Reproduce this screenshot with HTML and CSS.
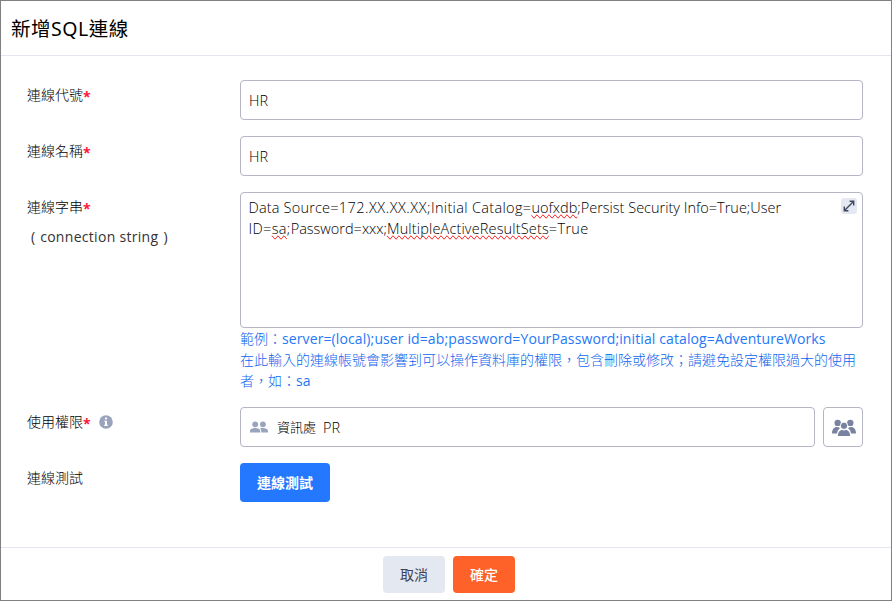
FILE: index.html
```html
<!DOCTYPE html>
<html lang="zh-Hant">
<head>
<meta charset="utf-8">
<title>新增SQL連線</title>
<link rel="stylesheet" href="styles.css">
</head>
<body>
<main class="dialog">
  <header class="dialog-header"><h1>新增SQL連線</h1></header>
  <div class="dialog-body">
    <div class="row">
      <div class="label">連線代號<b class="required">*</b></div>
      <div class="input"><span class="value">HR</span></div>
    </div>
    <div class="row">
      <div class="label">連線名稱<b class="required">*</b></div>
      <div class="input"><span class="value">HR</span></div>
    </div>
    <div class="row">
      <div class="label">連線字串<b class="required">*</b><div class="sub"><span class="paren">(</span><span class="sub-text">connection string</span><span class="paren">)</span></div></div>
      <div class="field">
        <div class="textarea">
          <div class="line"><span class="part-source">Data Source=</span><span class="part-host">172.XX.XX.XX;</span><span class="part-catalog">Initial Catalog=</span><span class="misspelt">uofxdb</span>;Persist Security Info=True;User</div>
          <div class="line"><span class="part-id">ID=<span class="misspelt">sa</span>;</span>Password=xxx;<span class="misspelt part-sets">MultipleActiveResultSets</span><span class="part-id">=True</span></div>
          <span class="expand"><svg width="16" height="16" viewBox="0 0 16 16" fill="none" stroke="#40485e" stroke-width="1.4"><path d="M3.5 12.5 12.5 3.5M8.6 3.3h4.1v4.1M3.3 8.6v4.1h4.1"/></svg></span>
        </div>
        <div class="hint">
          <div>範例：<span class="hint-latin">server=(local);user id=ab;password=YourPassword;initial catalog=AdventureWorks</span></div>
          <div>在此輸入的連線帳號會影響到可以操作資料庫的權限，包含刪除或修改；請避免設定權限過大的使用</div>
          <div>者，如：<span class="hint-latin">sa</span></div>
        </div>
      </div>
    </div>
    <div class="row">
      <div class="label">使用權限<b class="required">*</b><svg class="info" width="14" height="14" viewBox="0 0 14 14"><circle cx="7" cy="7" r="6.8" fill="#98a3bc"/><path fill="#fff" d="M6 2.6h2v2H6zM5.4 5.7H8v4h.8v1.2H5.2V9.7H6V6.900h-.6z"/></svg></div>
      <div class="members">
        <div class="input picker">
          <svg width="18" height="12" viewBox="0 0 18 12" fill="#98a3bc"><circle cx="5.2" cy="3.3" r="2.9"/><circle cx="12.9" cy="3.3" r="2.9"/><path d="M0 11.500V9.800c0-1.900 3-2.800 5.200-2.800s5 .9 5 2.800v1.700zM11.200 11.500V9.800c0-1-.5-1.800-1.300-2.400.9-.3 2-.4 3-.4 2.200 0 5.100.9 5.100 2.800v1.700z"/></svg>
          <span class="dept">資訊處</span><span class="value">PR</span>
        </div>
        <div class="group-button"><svg width="24" height="18" viewBox="0 0 24 18" fill="#7983a1"><circle cx="5.700" cy="3.900" r="3.200"/><circle cx="18.300" cy="3.900" r="3.200"/><path d="M0 14.500c0-4 1.800-6.500 5-6.500 1.300 0 2.300.4 3 1.200-1.600 1.100-2.600 2.700-3 5.300zM24 14.500c0-4-1.800-6.500-5-6.500-1.300 0-2.300.4-3 1.200 1.600 1.100 2.600 2.700 3 5.300z"/><circle cx="12" cy="6.800" r="3.700" stroke="#fff"/><path d="M5.900 17c0-3.800 2-6 4.300-6 .6.500 3 .5 3.600 0 2.300 0 4.300 2.200 4.300 6z"/></svg></div>
      </div>
    </div>
    <div class="row">
      <div class="label">連線測試</div>
      <div class="test-button">連線測試</div>
    </div>
  </div>
  <footer class="dialog-footer"><div class="button cancel">取消</div><div class="button confirm">確定</div></footer>
</main>
</body>
</html>
```
FILE: styles.css
```css
* { box-sizing: border-box; }
body {
  margin: 0;
  background: #fff;
  color: #333;
  font: 14px/21px "Noto Sans", "Noto Sans CJK TC", sans-serif;
}
.dialog {
  display: flex;
  flex-direction: column;
  height: 601px;
  border: 1px solid #808080;
}
.dialog-header {
  height: 55px;
  padding: 15px 10px 0;
  border-bottom: 1px solid #e3e6ee;
}
h1 { margin: 0; color: #000; font-size: 19.500px; line-height: 26px; font-weight: 400; letter-spacing: .5px; }
.dialog-body {
  flex: 1;
  display: flex;
  flex-direction: column;
  gap: 16px;
  padding: 24px 28px 0 26px;
}
.row { display: grid; grid-template-columns: 213px 623px; }
.label { padding-top: 4px; color: #000; font-family: "Noto Sans CJK TC", sans-serif; font-weight: 300; }
.required {
  display: inline-block;
  width: 8px;
  color: #ff1735;
  font: 700 14px/14px "Open Sans", sans-serif;
  vertical-align: -2px;
}
.sub { display: flex; gap: 5px; padding: 9px 0 0 4px; color: #333; font-family: "Open Sans", sans-serif; font-weight: 370; }
.sub-text { letter-spacing: .3px; }
.input {
  display: flex;
  align-items: center;
  height: 40px;
  padding: 0 8px;
  border: 1px solid #b5b5c3;
  border-radius: 4px;
}
.value, .line { color: #000; font-family: "Open Sans", sans-serif; font-size: 14.500px; font-weight: 300; }
.textarea {
  position: relative;
  height: 136px;
  padding: 4px 7.500px;
  border: 1px solid #b5b5c3;
  border-radius: 4px;
}
.line { white-space: nowrap; width: max-content; }
.part-source { letter-spacing: .18px; }
.part-host { letter-spacing: .53px; }
.part-catalog { letter-spacing: .33px; }
.part-id { letter-spacing: .35px; }
.part-sets { letter-spacing: .15px; }
.misspelt { text-decoration: spelling-error; }
.expand {
  position: absolute;
  top: 5px;
  right: 5px;
  width: 16px;
  height: 16px;
  border-radius: 3px;
  background: #e4e8f1;
}
.expand svg { display: block; }
.hint { height: 63px; color: #0d66ee; white-space: nowrap; font-family: "Noto Sans CJK TC", sans-serif; font-weight: 300; }
.hint-latin { color: #2378f7; font-family: "Open Sans", sans-serif; font-weight: 370; letter-spacing: .11px; }
.info { margin-left: 8px; vertical-align: -2px; }
.members { display: flex; gap: 8px; }
.picker { width: 575px; padding-left: 9px; color: #000; }
.dept { margin: 0 7px 2px 9px; font: 300 13px "Noto Sans CJK TC", sans-serif; }
.group-button {
  display: grid;
  place-items: center;
  width: 40px;
  height: 40px;
  padding: 2px 0 0 2px;
  border: 1px solid #b5b5c3;
  border-radius: 4px;
}
.test-button {
  width: 90px;
  height: 39px;
  border-radius: 4px;
  background: #2378ff;
  color: #fff;
  font-weight: 700;
  line-height: 39px;
  text-align: center;
}
.dialog-footer {
  display: flex;
  justify-content: center;
  gap: 8px;
  height: 53px;
  padding: 8px 0 0 6px;
  border-top: 1px solid #e3e6ee;
}
.button {
  width: 62px;
  height: 37px;
  border-radius: 4px;
  line-height: 37px;
  text-align: center;
}
.cancel { background: #e4e8f1; color: #3f4254; }
.confirm { background: #ff6229; color: #fff; font-weight: 500; }
```
